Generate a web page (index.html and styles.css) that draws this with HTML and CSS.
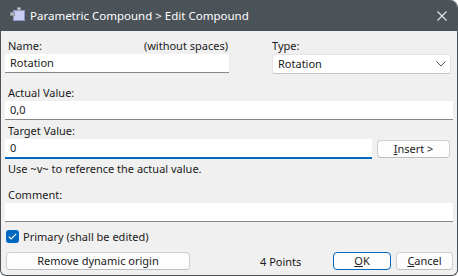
FILE: index.html
```html
<!DOCTYPE html>
<html lang="en">
<head>
    <meta charset="UTF-8">
    <meta name="viewport" content="width=device-width, initial-scale=1.0">
    <title>Parametric Compound &gt; Edit Compound</title>
    <link rel="stylesheet" href="styles.css">
</head>
<body>
    <div class="window">
        <div class="titlebar">
            <svg class="app-icon" width="16" height="16" viewBox="0 0 16 16">
                <rect x="3.5" y="3.5" width="11" height="10" fill="#c9cdf2" stroke="#8f95c9"/>
                <rect x="0.5" y="5.5" width="4" height="3" fill="#b9bcc4" stroke="#8d9098"/>
                <rect x="7.5" y="0.5" width="3" height="3" fill="#c4c6cc" stroke="#8d9098"/>
            </svg>
            <span class="title">Parametric Compound &gt; Edit Compound</span>
            <svg class="close" width="10" height="10" viewBox="0 0 10 10">
                <path d="M0.5 0.5 L9.5 9.5 M9.5 0.5 L0.5 9.5" stroke="#e8e8e8" stroke-width="1.1"/>
            </svg>
        </div>
        <div class="content">
            <div class="top-row">
                <div class="field name-field">
                    <div class="label-row">
                        <span>Name:</span>
                        <span>(without spaces)</span>
                    </div>
                    <div class="input">Rotation</div>
                </div>
                <div class="field type-field">
                    <div class="label-row type-label"><span>Type:</span></div>
                    <div class="input select">
                        <span>Rotation</span>
                        <svg width="10" height="6" viewBox="0 0 10 6">
                            <path d="M0.5 0.5 L5 5 L9.5 0.5" fill="none" stroke="#555" stroke-width="1"/>
                        </svg>
                    </div>
                </div>
            </div>

            <div class="label actual-label">Actual Value:</div>
            <div class="input">0,0</div>

            <div class="label target-label">Target Value:</div>
            <div class="target-row">
                <div class="input focused">0</div>
                <button class="btn insert-btn"><u>I</u>nsert &gt;</button>
            </div>
            <div class="hint">Use ~v~ to reference the actual value.</div>

            <div class="label comment-label">Comment:</div>
            <div class="input"></div>

            <label class="check-row">
                <span class="checkbox">
                    <svg width="9" height="7" viewBox="0 0 9 7">
                        <path d="M0.8 3.6 L3.2 5.9 L8.2 0.9" fill="none" stroke="#fff" stroke-width="1.2"/>
                    </svg>
                </span>
                Primary (shall be edited)
            </label>

            <div class="bottom-row">
                <button class="btn remove-btn">Remove dynamic origin</button>
                <span class="points">4 Points</span>
                <button class="btn ok-btn"><u>O</u>K</button>
                <button class="btn cancel-btn"><u>C</u>ancel</button>
            </div>
        </div>
    </div>
</body>
</html>
```

FILE: styles.css
```css
html, body {
    margin: 0;
    padding: 0;
    background: #ffffff;
}
body {
    font-family: 'Noto Sans', 'Open Sans', sans-serif;
    font-size: 11px;
    color: #1b1b1b;
}
.window {
    width: 458px;
    height: 276px;
    box-sizing: border-box;
    border: 1px solid #4b5258;
    border-top: none;
    border-radius: 0 8px 6px 6px;
    background: #f0f0f0;
    overflow: hidden;
}
.titlebar {
    height: 31px;
    background: #4b5258;
    display: flex;
    align-items: center;
    padding-left: 9px;
    padding-right: 10px;
    color: #ffffff;
}
.app-icon {
    margin-right: 4px;
    margin-top: -1px;
}
.title {
    flex: 1;
    font-size: 11.5px;
}
.content {
    padding: 7px 4px 0 4px;
    display: flex;
    flex-direction: column;
}
.top-row {
    display: flex;
    gap: 43px;
}
.name-field {
    width: 224px;
}
.type-field {
    width: 179px;
}
.label-row {
    display: flex;
    justify-content: space-between;
    height: 16px;
    line-height: 16px;
    padding: 0 1px 0 3px;
}
.type-label {
    padding-left: 0;
}
.label, .hint {
    height: 16px;
    line-height: 16px;
    padding-left: 3px;
}
.input {
    height: 18px;
    line-height: 18px;
    background: #ffffff;
    border-bottom: 1px solid #868686;
    border-radius: 2px 2px 0 0;
    padding: 0 5px;
    box-sizing: content-box;
}
.select {
    display: flex;
    align-items: center;
    justify-content: space-between;
    border: 1px solid #e3e3e3;
    border-bottom: 1px solid #c4c4c4;
    border-radius: 3px;
    padding-right: 4px;
}
.actual-label {
    margin-top: 11px;
}
.target-label {
    margin-top: 3px;
}
.target-row {
    display: flex;
    gap: 5px;
    align-items: flex-start;
}
.target-row .input {
    width: 357px;
}
.focused {
    border-bottom: 2px solid #0067c0;
}
.hint {
    margin-top: 2px;
}
.comment-label {
    margin-top: 10px;
}
.btn {
    font-family: inherit;
    font-size: 11px;
    color: #1b1b1b;
    background: #fdfdfd;
    border: 1px solid #d0d0d0;
    border-bottom-color: #bdbdbd;
    border-radius: 4px;
    height: 18px;
    padding: 0;
    line-height: 16px;
}
.insert-btn {
    width: 73px;
    margin-top: 1px;
}
.check-row {
    display: flex;
    align-items: center;
    gap: 4px;
    margin-top: 7px;
    height: 14px;
    padding-left: 1px;
}
.checkbox {
    width: 13px;
    height: 13px;
    border-radius: 3px;
    background: #0067c0;
    display: flex;
    align-items: center;
    justify-content: center;
}
.bottom-row {
    display: flex;
    align-items: center;
    margin-top: 9px;
    padding-left: 1px;
}
.remove-btn {
    width: 184px;
}
.points {
    margin-left: 70px;
    width: 73px;
}
.ok-btn {
    width: 58px;
    border: 1px solid #0067c0;
}
.cancel-btn {
    width: 57px;
    margin-left: 5px;
}
```
